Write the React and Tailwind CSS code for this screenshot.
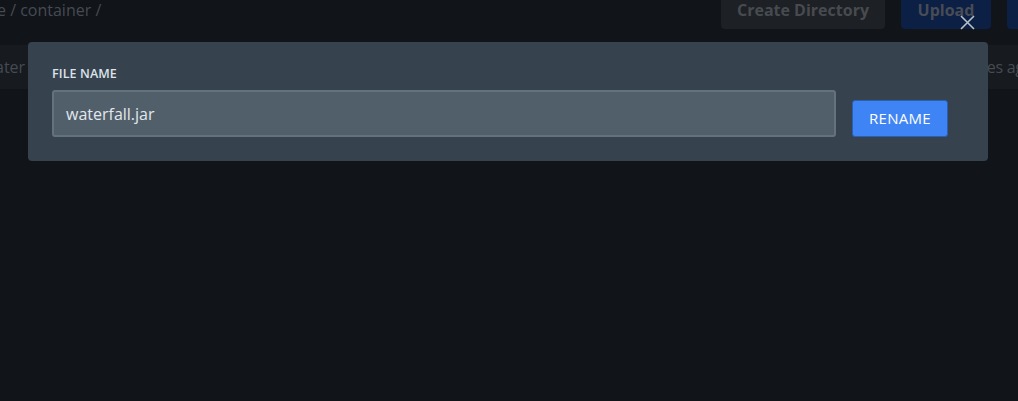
export default function App() {
  const font = { fontFamily: '"Open Sans", "Noto Sans", sans-serif' };
  return (
    <div className="relative w-[1018px] h-[401px] overflow-hidden bg-[#111419]" style={font}>
      {/* background page (dimmed) */}
      <div className="flex items-start justify-between h-[45px]">
        <div className="ml-[-3px] text-[16px] leading-[20px] text-[#454b53]">
          e / container /
        </div>
        <div className="flex gap-4 -mt-[9px]">
          <div className="h-[38px] w-[164px] rounded-[4px] bg-[#1d2024] flex items-center justify-center text-[16px] font-bold text-[#474b50]">
            Create Directory
          </div>
          <div className="h-[38px] w-[90px] rounded-[4px] bg-[#0c1f45] flex items-center justify-center text-[16px] font-bold text-[#474c55]">
            Upload
          </div>
          <div className="h-[38px] w-[30px] rounded-[4px] bg-[#0c1f45] mr-[-19px]" />
        </div>
      </div>
      <div className="h-[44px] bg-[#171a1f] flex items-center justify-between text-[16px] text-[#454b52]">
        <span className="ml-[-5px]">ater</span>
        <span className="mr-[-15px] tracking-[-0.3px]">2 minutes ago</span>
      </div>

      {/* close */}
      <div className="absolute left-[959px] top-[14px] w-[17px] h-[17px]">
        <svg viewBox="0 0 17 17" width="17" height="17" fill="none" stroke="#b8c0ca" strokeWidth="1.6">
          <path d="M2 2 L15 15 M15 2 L2 15" />
        </svg>
      </div>

      {/* modal */}
      <div className="absolute left-[28px] top-[42px] w-[960px] h-[119px] rounded-[4px] bg-[#36424e] px-6 pt-[23px] flex flex-col">
        <div className="text-[12.5px] font-semibold uppercase tracking-[0.1px] text-[#dde3ea] leading-[17px]">
          File Name
        </div>
        <div className="flex items-end mt-[8px]">
          <div className="w-[784px] h-[47px] rounded-[3px] bg-[#515f6b] border-2 border-[#64717e] flex items-center pl-[12px] text-[16px] text-[#e3e7ec]">
            waterfall.jar
          </div>
          <div className="ml-[16px] w-[96px] h-[37px] rounded-[3px] bg-[#3e84f4] border border-[#2b5fb0] flex items-center justify-center text-[15px] text-white tracking-[0.3px]">
            RENAME
          </div>
        </div>
      </div>
    </div>
  );
}
